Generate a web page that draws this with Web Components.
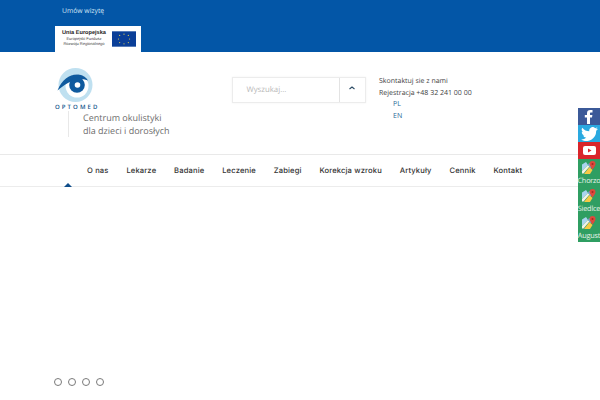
<!DOCTYPE html>
<html lang="pl"><head><meta charset="utf-8"><title>Optomed</title>
<style>
html,body{margin:0;padding:0;height:400px;overflow:hidden;background:#fff;font-family:"Open Sans","Liberation Sans",sans-serif;text-rendering:geometricPrecision}
</style></head><body>
<site-page></site-page>
<template id="t-page"><style>
:host{display:block;height:400px;position:relative;overflow:hidden}
main{height:213px;padding:0 0 0 54px;display:flex;align-items:flex-end}
</style>
<top-bar></top-bar><site-header></site-header><main-nav></main-nav>
<main><slider-dots></slider-dots></main>
<social-rail></social-rail>
</template>

<template id="t-top"><style>
:host{display:flex;flex-direction:column;height:52px;background:#0356a7;padding-left:55px;box-sizing:border-box}
a{font-size:6.800px;line-height:12px;color:#d5e6f6;margin:5px 0 9px 7px;height:12px}
.eu{width:86px;height:26px;background:#fff;display:flex;box-sizing:border-box;padding:4px 5px 0 5px;gap:4px}
.t{width:50px;text-align:center;font-size:4px;line-height:4.600px;color:#444;font-family:"Liberation Sans",sans-serif;white-space:nowrap}
.t b{display:block;font-size:5.600px;line-height:7px;color:#222}
svg{display:block;margin-top:1px}
</style>
<a>Umów wizytę</a>
<div class="eu"><div class="t"><b>Unia Europejska</b>Europejski Fundusz<br>Rozwoju Regionalnego</div>
<svg width="25" height="16" viewBox="0 0 25 16"><rect width="25" height="16" fill="#0b3f98"/><g fill="#e8d44a"><circle cx="12.500" cy="3" r=".6"/><circle cx="17" cy="4.300" r=".6"/><circle cx="18.300" cy="8" r=".6"/><circle cx="17" cy="11.700" r=".6"/><circle cx="12.500" cy="13" r=".6"/><circle cx="8" cy="11.700" r=".6"/><circle cx="6.700" cy="8" r=".6"/><circle cx="8" cy="4.300" r=".6"/></g></svg></div>
</template>

<template id="t-header"><style>
:host{display:flex;height:102px;box-sizing:border-box;padding:0 0 0 55px;position:relative}
.brand{width:176.500px;flex:none;padding-top:14px}
.logo{display:block;margin-left:-1px}
.name{font:600 6px/9px "Open Sans",sans-serif;letter-spacing:2.100px;color:#14568c;height:9px;margin:0;white-space:nowrap}
.sl{margin:-1.500px 0 0 13px;border-left:1px solid #e8e8e8;height:26px;padding-left:14px;font-size:9px;line-height:13px;color:#6d6d6d;white-space:nowrap}
.search{width:134px;height:26px;margin-top:24.500px;margin-right:13.500px;flex:none;display:flex;border:1px solid #ececec;box-sizing:border-box;box-shadow:0 0 2px #f2f2f2}
.inp{flex:1;font-size:7.800px;line-height:24px;color:#b8b8b8;padding-left:14px;border-right:1px solid #e3e3e3}
.btn{width:25px;display:flex;align-items:center;justify-content:center;padding-bottom:3px;box-sizing:border-box}
.contact{font-size:7px;line-height:11.700px;color:#444;padding-top:24px;white-space:nowrap}
.lang{color:#296a98;padding-left:14px}
</style>
<div class="brand">
<svg class="logo" width="42" height="37" viewBox="0 0 42 37"><circle cx="21.500" cy="19" r="17" fill="#bfe0f0"/><circle cx="23" cy="20" r="11.500" fill="#fff"/><path d="M3.500 24.500C8 12.500 17 7.500 24.500 8.500c5 .7 8 3 9.500 6C29.500 12.500 26 13 23 14c-7 1-13 5-19.500 10.500Z" fill="#0f5a9e"/><circle cx="23" cy="19" r="7.800" fill="#0f5a9e"/><circle cx="23.500" cy="19" r="2.800" fill="#fff"/></svg>
<div class="name">OPTOMED</div>
<div class="sl"><div>Centrum okulistyki</div><div>dla dzieci i dorosłych</div></div>
</div>
<div class="search"><div class="inp">Wyszukaj...</div><div class="btn"><svg width="6" height="4" viewBox="0 0 6 4"><path d="M.5 3 3 1l2.500 2" fill="none" stroke="#2b4a63" stroke-width="1.100"/></svg></div></div>
<div class="contact"><div>Skontaktuj sie z nami</div><div>Rejestracja +48 32 241 00 00</div><div class="lang">PL</div><div class="lang">EN</div></div>
</template>

<template id="t-nav"><style>
:host{display:flex;height:33px;box-sizing:border-box;border-top:1px solid #e9e9e9;border-bottom:1px solid #ececec;position:relative;align-items:center;padding-left:87px;font:500 7.600px/1 Inter,"Open Sans",sans-serif;color:#333;letter-spacing:.15px}
span{white-space:nowrap}
i{position:absolute;left:64px;bottom:-1px;width:0;height:0;border:4px solid transparent;border-top:0;border-bottom:4px solid #0f4d8a}
nav{display:flex;gap:17.800px}
</style>
<nav><span>O nas</span><span>Lekarze</span><span>Badanie</span><span>Leczenie</span><span>Zabiegi</span><span>Korekcja wzroku</span><span>Artykuły</span><span>Cennik</span><span>Kontakt</span></nav><i></i>
</template>

<template id="t-dots"><style>
:host{display:flex;gap:6px;margin-bottom:14.500px}
b{border:1px solid #7a7a7a;border-radius:50%;display:block;width:6px;height:6px}
</style><b></b><b></b><b></b><b></b></template>

<template id="t-rail"><style>
:host{position:absolute;left:578px;top:108px;width:22px;display:flex;flex-direction:column}
.s{height:17px;display:flex;align-items:center;justify-content:center}
.fb{background:#3b5998}.tw{background:#2aa9e0}.yt{background:#d9252a}
.g{background:#2f9e62;height:27.700px;box-sizing:border-box;display:flex;flex-direction:column;align-items:center;color:#e6f3ea;font-size:7.300px;line-height:10px;padding-top:2px}
.g span{display:block;white-space:nowrap;margin-top:1px;letter-spacing:-.2px}
</style>
<div class="s fb"><svg width="10" height="15" viewBox="0 0 10 15"><path d="M3 15V8.500H.8V6H3V4.200C3 2 4.300 1 6.200 1H8.500v2.400H7c-.8 0-1 .4-1 1V6h2.400l-.4 2.500H6V15Z" fill="#fff"/></svg></div>
<div class="s tw"><svg width="17" height="14" viewBox="0 0 24 20"><path d="M24 2.400a10 10 0 0 1-2.800.8A5 5 0 0 0 23.300.5a10 10 0 0 1-3.100 1.200 4.900 4.900 0 0 0-8.400 4.500A14 14 0 0 1 1.700.9 4.900 4.900 0 0 0 3.200 7.500a5 5 0 0 1-2.200-.6 4.900 4.900 0 0 0 3.900 4.900 5 5 0 0 1-2.200.1 4.900 4.900 0 0 0 4.600 3.400A9.900 9.900 0 0 1 0 17.800 14 14 0 0 0 21.500 5.400 10 10 0 0 0 24 2.400Z" fill="#fff"/></svg></div>
<div class="s yt"><svg width="13" height="9" viewBox="0 0 13 9"><rect width="13" height="9" rx="2" fill="#fff"/><path d="M5 2.500 8.500 4.500 5 6.500Z" fill="#d9252a"/></svg></div>
<div class="g"><map-pin></map-pin><span>Chorzo</span></div>
<div class="g"><map-pin></map-pin><span>Siedlce</span></div>
<div class="g"><map-pin></map-pin><span>August</span></div>
</template>

<template id="t-pin"><style>:host{display:block;height:14px}svg{display:block}</style>
<svg width="16" height="14" viewBox="0 0 16 14"><path d="M1 3.500 5 1l2 3-6 6Z" fill="#a9d3ee"/><path d="M1 10 7 4l1.500 1.500L2.500 12.500H1Z" fill="#f3f1e6"/><path d="M3 13 8.500 6l3 3-2.500 4Z" fill="#f6c945"/><path d="M7 3l2-1 2 4-2 1Z" fill="#7aa8e8"/><path d="M11.500 0a3 3 0 0 1 3 3c0 2-3 5.500-3 5.500s-3-3.500-3-5.500a3 3 0 0 1 3-3Z" fill="#dc4a3d"/><circle cx="11.500" cy="3" r="1" fill="#a32a22"/></svg></template>

<script>
const el=(tag,id)=>customElements.define(tag,class extends HTMLElement{constructor(){super();this.attachShadow({mode:"open"}).appendChild(document.getElementById(id).content.cloneNode(true))}});
el("map-pin","t-pin");el("top-bar","t-top");el("site-header","t-header");el("main-nav","t-nav");el("slider-dots","t-dots");el("social-rail","t-rail");el("site-page","t-page");
</script>
</body></html>
